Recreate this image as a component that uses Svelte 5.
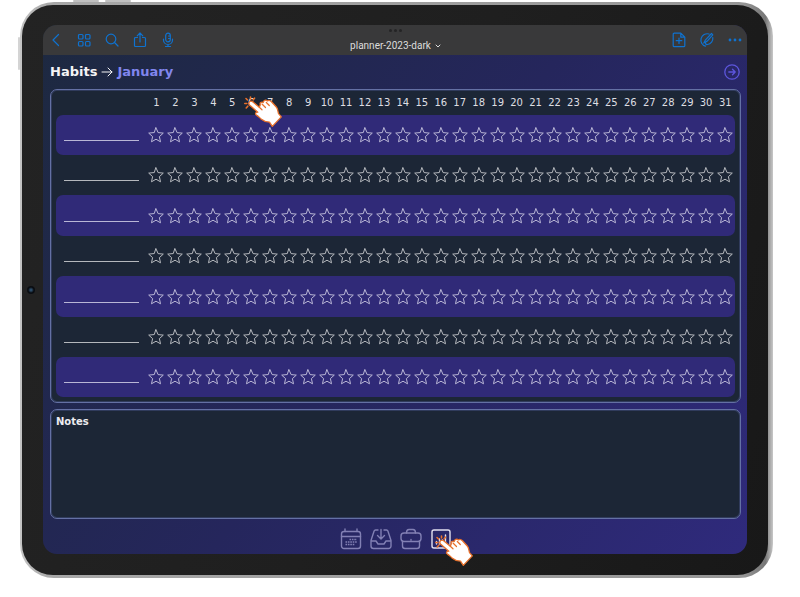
<script>
  const days = Array.from({ length: 31 }, (_, i) => i + 1);
  let habits = $state(
    Array.from({ length: 7 }, () => ({ name: '', done: Array(31).fill(false) }))
  );
  let notes = $state('');
</script>

{#snippet pointer()}
  <svg class="pointer" viewBox="0 0 38 32" width="38" height="32" aria-hidden="true">
    <g stroke="#e8702a" stroke-width="1.6" stroke-linecap="round">
      <path d="M6.500 1v2M2 2.500l1.500 1.500M.8 7.500h2M2.200 12l1.600-1.800M10.500 2.200L9.200 3.800" />
    </g>
    <path
      d="M5 6.500C6 4.600 7.700 5 9 6l6.300 5.300 1-2.500c-.8-1.800 1-3.300 2.900-2.300.3-2.300 2.600-3 4.300-1.600 1.200-1 2.800-.3 4 .9l4.800 5.200c1.600 1.800 1.500 4.400 2.200 6.600l2.800 3.300-9 9.500-2.800-4.300c-3.300-.3-6.200-1.200-8.500-3.200-1.700-1.500-2.800-2.900-4.600-3.800-1.600-1.300-.7-3.200 1.400-2.900L5.500 9C4.800 8.200 4.600 7.400 5 6.500z"
      fill="#fff" stroke="#e8702a" stroke-width="1.300" stroke-linejoin="round"
    />
    <path d="M15.300 11.300l2.700 2.500M18 8l3.500 3.500M22.300 6.500l3 3" fill="none" stroke="#e8702a" stroke-width="1.200" stroke-linecap="round" />
  </svg>
{/snippet}

<main>
  <div class="device">
    <span class="key volume-up"></span>
    <span class="key volume-down"></span>
    <span class="key power"></span>
    <div class="bezel">
      <span class="camera"></span>
      <div class="screen">
        <header class="toolbar">
          <div class="tools">
            <button aria-label="Back">
              <svg viewBox="0 0 16 16"><path d="M10.500 2.500L5 8l5.500 5.500" /></svg>
            </button>
            <button aria-label="Thumbnails">
              <svg viewBox="0 0 16 16"><rect x="2.500" y="2.500" width="4.500" height="4.500" rx="1" /><rect x="9.500" y="2.500" width="4.500" height="4.500" rx="1" /><rect x="2.500" y="9.500" width="4.500" height="4.500" rx="1" /><rect x="9.500" y="9.500" width="4.500" height="4.500" rx="1" /></svg>
            </button>
            <button aria-label="Search">
              <svg viewBox="0 0 16 16"><circle cx="7" cy="7" r="4.800" /><path d="M10.500 10.500L14 14" /></svg>
            </button>
            <button aria-label="Share">
              <svg viewBox="0 0 16 16"><path d="M5.500 5.500h-2a1 1 0 0 0-1 1v7a1 1 0 0 0 1 1h9a1 1 0 0 0 1-1v-7a1 1 0 0 0-1-1h-2M8 10V1M5.200 3.800L8 1l2.800 2.800" /></svg>
            </button>
            <button aria-label="Record">
              <svg viewBox="0 0 16 16"><rect x="5.700" y="1.200" width="4.600" height="8.600" rx="2.300" /><path d="M3.500 7v1a4.500 4.500 0 0 0 9 0V7M8 12.500v2M5.500 14.500h5M8.500 4h1.500M8.500 6.500h1.500" /></svg>
            </button>
          </div>
          <div class="document">
            <span class="dots"><i></i><i></i><i></i></span>
            <button class="name">
              planner-2023-dark
              <svg viewBox="0 0 6 6"><path d="M1 2l2 2 2-2" /></svg>
            </button>
          </div>
          <div class="tools end">
            <button aria-label="Add page">
              <svg viewBox="0 0 16 16"><path d="M9.800 1.200H3.200a1 1 0 0 0-1 1v11.500a1 1 0 0 0 1 1h9.600a1 1 0 0 0 1-1V5.200zM9.800 1.200v4h4M8 6v5.500M5.200 8.700h5.600" /></svg>
            </button>
            <button aria-label="Pen mode">
              <svg viewBox="0 0 16 16"><path d="M10 2A6.200 6.200 0 1 0 6.500 14.200M13.800 5.500A6.200 6.200 0 0 1 8.500 12.500C6.500 12.800 6 11 7.200 9.500M4.800 11l1.700-3.200L12.500 1.500l1.300 1.300L8 9.300z" /></svg>
            </button>
            <button aria-label="More">
              <svg viewBox="0 0 16 16" class="solid"><circle cx="3" cy="8" r="1.400" /><circle cx="8" cy="8" r="1.400" /><circle cx="13" cy="8" r="1.400" /></svg>
            </button>
          </div>
        </header>

        <div class="page">
          <div class="heading">
            <h1>
              Habits
              <svg viewBox="0 0 12 12"><path d="M1 6h10M7 2l4 4-4 4" /></svg>
              <a href="#january">January</a>
            </h1>
            <a class="next" href="#february" aria-label="Next month">
              <svg viewBox="0 0 16 16"><circle cx="8" cy="8" r="7.200" /><path d="M4.800 8h6.400M8.500 5.200L11.200 8l-2.700 2.800" /></svg>
            </a>
          </div>

          <section class="panel tracker">
            <table>
              <thead>
                <tr>
                  <th class="label" aria-label="Habit"></th>
                  {#each days as day}
                    <th scope="col">
                      {day}
                      {#if day === 6}{@render pointer()}{/if}
                    </th>
                  {/each}
                </tr>
              </thead>
              <tbody>
                {#each habits as habit, row}
                  <tr>
                    <td class="label">
                      <input type="text" aria-label="Habit {row + 1}" bind:value={habit.name} />
                    </td>
                    {#each days as day, i}
                      <td>
                        <button
                          class="star"
                          aria-label="Habit {row + 1}, day {day}"
                          aria-pressed={habit.done[i]}
                          onclick={() => (habit.done[i] = !habit.done[i])}
                        >
                          <svg viewBox="0 0 16 16"><path d="M8 .8l2.100 4.800 5.200.5-3.900 3.500 1.100 5.200L8 12.200l-4.500 2.600 1.100-5.200L.7 6.100l5.200-.5z" /></svg>
                        </button>
                      </td>
                    {/each}
                  </tr>
                {/each}
              </tbody>
            </table>
          </section>

          <section class="panel notes">
            <label for="notes">Notes</label>
            <textarea id="notes" bind:value={notes}></textarea>
          </section>

          <nav>
            <a href="#calendar" aria-label="Calendar">
              <svg viewBox="0 0 22 22"><rect x="1.500" y="3.500" width="19" height="17" rx="2.500" /><path d="M1.500 8.500h19M5 1v2.500M17 1v2.500" /><path class="grid" d="M9.500 11.500h7.500M5.500 14h11.500M5.500 16.500h9" /></svg>
            </a>
            <a href="#inbox" aria-label="Inbox">
              <svg viewBox="0 0 22 22"><path d="M8 2H5.500a1.500 1.500 0 0 0-1.400 1L1 12.500V18a2.500 2.500 0 0 0 2.500 2.500h15A2.500 2.500 0 0 0 21 18v-5.500L17.900 3a1.500 1.500 0 0 0-1.400-1H14M11 1.500v9M7.500 7.500L11 11l3.500-3.500M1 13h5l2 3h6l2-3h5" /></svg>
            </a>
            <a href="#work" aria-label="Work">
              <svg viewBox="0 0 22 22"><rect x="1" y="5" width="20" height="8.500" rx="3" /><path d="M6.500 5c0-2.500 1-3.500 2.500-3.500h4c1.500 0 2.500 1 2.500 3.500M2.500 13v5A2.500 2.500 0 0 0 5 20.500h12a2.500 2.500 0 0 0 2.500-2.500v-5M11 11.500v.8" /></svg>
            </a>
            <a class="current" href="#habits" aria-label="Habits">
              <svg viewBox="0 0 22 22"><rect x="2" y="2" width="18" height="18" rx="2" /><path d="M6.500 16v-2.500M9.500 16v-5M12.500 16v-4M15.500 16V7" /></svg>
              {@render pointer()}
            </a>
          </nav>
        </div>
      </div>
    </div>
  </div>
</main>

<style>
  :global(body) {
    margin: 0;
    background: #fff;
  }

  main {
    padding: 2px 27px 18px 20px;
    font-family: 'DejaVu Sans', sans-serif;
  }

  main :global(*) {
    box-sizing: border-box;
  }

  button {
    padding: 0;
    border: 0;
    background: none;
    color: inherit;
    font: inherit;
  }

  svg {
    display: block;
    fill: none;
    stroke: currentColor;
    stroke-linecap: round;
    stroke-linejoin: round;
  }

  .device {
    position: relative;
    padding: 3px 5px 3px 2px;
    border-radius: 34px;
    background: linear-gradient(90deg, #c4c4c4, #a8a8a8 4%, #969696 96%, #777 99%, #c8c8c8);
  }

  .key {
    position: absolute;
    border-radius: 1px;
    background: #c0c0c0;
  }

  .volume-up,
  .volume-down {
    top: -2px;
    left: 53px;
    width: 26px;
    height: 2px;
  }

  .volume-down {
    left: 85px;
  }

  .power {
    top: 35px;
    left: -2px;
    width: 2px;
    height: 33px;
    background: #d4d4d4;
  }

  .bezel {
    position: relative;
    padding: 20px 21px 21px;
    border-radius: 31px;
    background: linear-gradient(110deg, #232323, #1f1f1f 50%, #181818);
  }

  .camera {
    position: absolute;
    top: calc(50% - 4px);
    left: 5px;
    width: 8px;
    height: 8px;
    border-radius: 50%;
    background: radial-gradient(#2c4c68 15%, #0a0d12 50%);
  }

  .screen {
    border-radius: 14px;
    background: linear-gradient(125deg, #1d2940, #25265c 50%, #2f2a7c);
  }

  .toolbar {
    display: grid;
    grid-template-columns: 1fr auto 1fr;
    height: 30px;
    padding-left: 1px;
    border-radius: 14px 14px 0 0;
    background: #39393a;
  }

  .tools {
    display: flex;
    align-items: center;
    gap: 4px;
    color: #0f72cf;
  }

  .end {
    justify-content: flex-end;
  }

  .tools button {
    display: grid;
    place-items: center;
    width: 24px;
    height: 28px;
  }

  .tools svg {
    width: 16px;
    height: 16px;
    stroke-width: 1.2;
  }

  .tools .solid {
    fill: currentColor;
    stroke: none;
  }

  .document {
    display: flex;
    flex-direction: column;
    align-items: center;
    gap: 8px;
    padding-top: 4px;
  }

  .dots {
    display: flex;
    gap: 2px;
  }

  .dots i {
    width: 3px;
    height: 3px;
    border-radius: 50%;
    background: #242425;
  }

  .name {
    display: flex;
    align-items: center;
    gap: 4px;
    color: #dcdcdc;
    font: 10px/12px Roboto, sans-serif;
  }

  .name svg {
    width: 6px;
    height: 6px;
  }

  .page {
    padding: 0 6px 0 7px;
  }

  .heading {
    display: flex;
    align-items: center;
    justify-content: space-between;
    height: 34px;
  }

  h1 {
    display: flex;
    align-items: center;
    gap: 4px;
    margin: 0;
    color: #f4f4f6;
    font: bold 13px/18px 'DejaVu Sans', sans-serif;
  }

  h1 a {
    color: #8186ee;
    text-decoration: none;
  }

  h1 svg {
    width: 12px;
    height: 12px;
    stroke-width: 1;
  }

  .next {
    margin-right: 1px;
    color: #5d56dc;
  }

  .next svg {
    width: 16px;
    height: 16px;
    stroke-width: 1.3;
  }

  .panel {
    border: 1px solid #6470a4;
    border-radius: 7px;
    background: #1c2636;
    box-shadow: inset 0 0 0 1px #303b5c;
  }

  .tracker {
    padding: 1px 5px 5px;
  }

  table {
    width: 100%;
    border-spacing: 0;
    table-layout: fixed;
  }

  th,
  td {
    padding: 0;
  }

  th {
    position: relative;
    height: 24px;
    color: #dedee2;
    font-size: 10px;
    font-weight: normal;
    line-height: 12px;
    text-align: center;
    white-space: nowrap;
  }

  .label {
    width: 91px;
  }

  td {
    height: 40px;
    color: #b5b8bd;
    vertical-align: middle;
  }

  tr:nth-child(odd) td {
    background: #302a78;
    color: #b9b6d6;
  }

  tr:nth-child(3) td,
  tr:nth-child(5) td {
    height: 41px;
  }

  td:first-child {
    border-radius: 7px 0 0 7px;
  }

  td:last-child {
    border-radius: 0 7px 7px 0;
  }

  input {
    display: block;
    width: 75px;
    height: 12px;
    margin: 0 8px;
    padding: 0;
    border: 0;
    border-bottom: 1px solid currentColor;
    outline: 0;
    background: none;
    color: inherit;
    font: 10px/11px 'DejaVu Sans', sans-serif;
  }

  .star {
    display: block;
    margin: 0 auto;
  }

  .star svg {
    width: 16px;
    height: 16px;
  }

  .star[aria-pressed='true'] svg {
    fill: currentColor;
  }

  .notes {
    display: flex;
    flex-direction: column;
    height: 110px;
    margin-top: 6px;
    padding: 5px;
  }

  .notes label {
    color: #ececf0;
    font: bold 10px/14px 'DejaVu Sans', sans-serif;
  }

  textarea {
    flex: 1;
    padding: 0;
    border: 0;
    outline: 0;
    resize: none;
    background: none;
    color: #dedee2;
    font: 10px/14px 'DejaVu Sans', sans-serif;
  }

  nav {
    display: flex;
    align-items: center;
    justify-content: center;
    gap: 8px;
    height: 35px;
    padding-top: 5px;
  }

  nav a {
    position: relative;
    color: #8280b4;
  }

  nav a > svg {
    width: 22px;
    height: 22px;
    stroke-width: 1.4;
  }

  nav .grid {
    stroke-width: 1.6;
    stroke-linecap: butt;
    stroke-dasharray: 1.6 0.8;
  }

  nav .current {
    color: #e2e0f0;
  }

  .pointer,
  nav a > .pointer {
    position: absolute;
    z-index: 1;
    top: 5px;
    left: 2px;
    width: 38px;
    height: 32px;
    pointer-events: none;
  }

  nav a > .pointer {
    top: 7px;
    left: 5px;
  }
</style>
